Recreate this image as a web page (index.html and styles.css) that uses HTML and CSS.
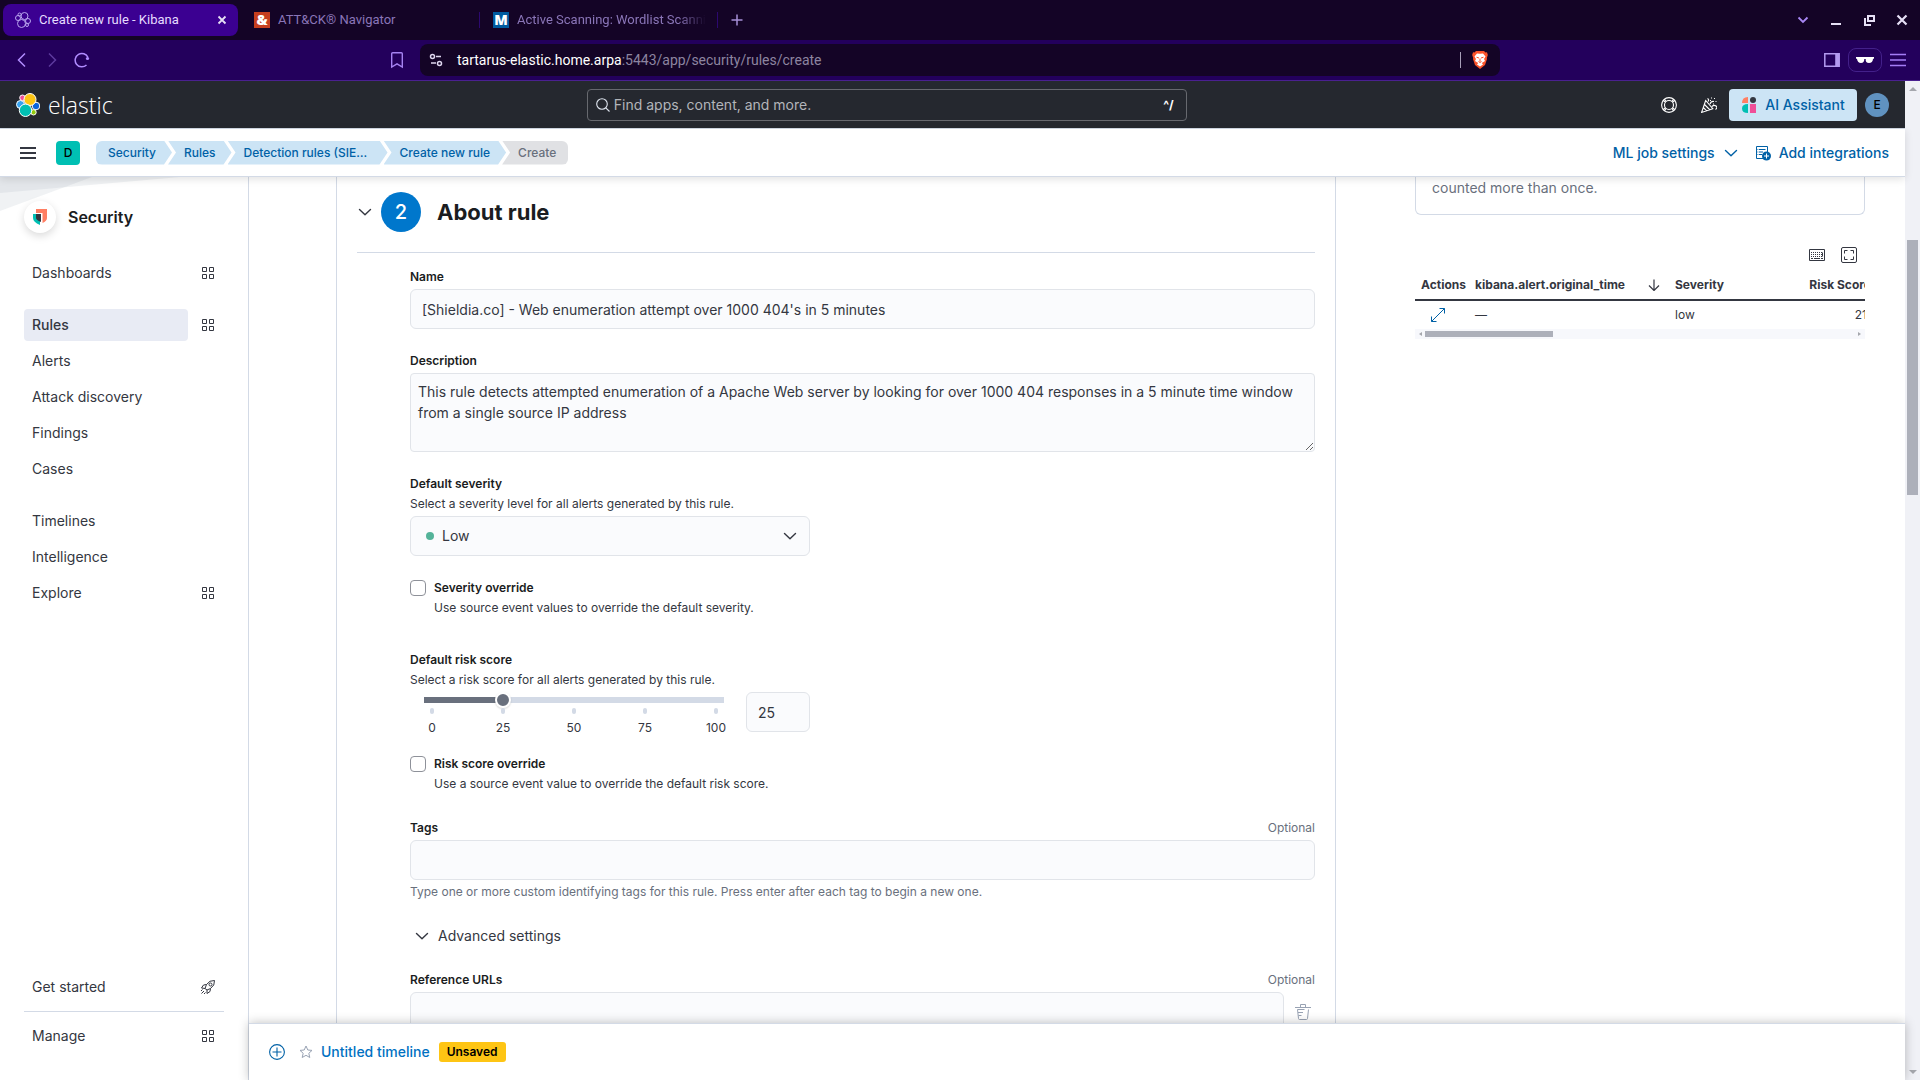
FILE: index.html
```
<!DOCTYPE html>
<html lang="en">
<head>
    <meta charset="UTF-8">
    <meta name="viewport" content="width=device-width, initial-scale=1.0">
    <title>Create new rule - Kibana</title>
    <link rel="stylesheet" href="styles.css">
</head>
<body>

<!-- Shared icons -->
<svg class="sprite" aria-hidden="true">
    <symbol id="i-grid" viewBox="0 0 16 16"><path d="M2.5 2.5h4v4h-4zM9.500 2.500h4v4h-4zM2.500 9.500h4v4h-4zM9.500 9.500h4v4h-4z" fill="none" stroke="currentColor" stroke-linejoin="round"/></symbol>
    <symbol id="i-down" viewBox="0 0 16 16"><path d="M2.500 5.500 8 10.800l5.500-5.300" fill="none" stroke="currentColor" stroke-width="1.400" stroke-linecap="round" stroke-linejoin="round"/></symbol>
</svg>

<!-- Browser window -->
<div class="tabs">
    <div class="tab active">
        <svg width="16" height="16" viewBox="0 0 16 16" fill="none" stroke="#b9a5ee"><circle cx="9.500" cy="4" r="3.500"/><circle cx="6.500" cy="11.500" r="4"/><circle cx="3" cy="6" r="2.500"/><circle cx="13" cy="9" r="2.500"/><circle cx="4.500" cy="2.500" r="1.500"/><circle cx="12" cy="13" r="1.500"/></svg>
        <span class="tab-title">Create new rule - Kibana</span>
        <button class="bare" aria-label="Close tab"><svg width="10" height="10" viewBox="0 0 10 10" stroke="#e6e0f5" stroke-width="1.800"><path d="M1.500 1.500l7 7M8.500 1.500l-7 7"/></svg></button>
    </div>
    <div class="tab">
        <span class="favicon red">&amp;</span>
        <span class="tab-title">ATT&amp;CK® Navigator</span>
    </div>
    <div class="tab last">
        <span class="favicon blue">M</span>
        <span class="tab-title fade">Active Scanning: Wordlist Scanning</span>
    </div>
    <button class="bare new-tab" aria-label="New tab"><svg width="12" height="12" viewBox="0 0 12 12" stroke="#a58fd6" stroke-width="1.500"><path d="M6 .500v11M.500 6h11"/></svg></button>
    <div class="window-buttons">
        <button class="bare" aria-label="Search tabs"><svg width="12" height="12" viewBox="0 0 12 12" fill="none" stroke="#a988f5" stroke-width="1.800"><path d="M1.500 3.500 6 8l4.500-4.500"/></svg></button>
        <button class="bare" aria-label="Minimize"><svg width="12" height="12" viewBox="0 0 12 12" stroke="#e6e0f5" stroke-width="2"><path d="M1 10h10"/></svg></button>
        <button class="bare" aria-label="Restore"><svg width="12" height="12" viewBox="0 0 12 12" fill="none" stroke="#e6e0f5" stroke-width="2"><path d="M5 2h6v5H5zM2 4v7h6"/></svg></button>
        <button class="bare" aria-label="Close"><svg width="12" height="12" viewBox="0 0 12 12" stroke="#e6e0f5" stroke-width="2.200"><path d="M1.500 1.500l9 9M10.500 1.500l-9 9"/></svg></button>
    </div>
</div>

<div class="toolbar">
    <div class="nav-buttons">
        <button class="bare" aria-label="Back"><svg width="16" height="16" viewBox="0 0 16 16" fill="none" stroke="#b18cff" stroke-width="1.500"><path d="M11 1.500 4.500 8 11 14.500"/></svg></button>
        <button class="bare" aria-label="Forward"><svg width="16" height="16" viewBox="0 0 16 16" fill="none" stroke="#5d3a9e" stroke-width="1.500"><path d="M5 1.500 11.500 8 5 14.500"/></svg></button>
        <button class="bare" aria-label="Reload"><svg width="16" height="16" viewBox="0 0 16 16" fill="none" stroke="#b18cff" stroke-width="1.500"><path d="M12.500 13A6.700 6.700 0 1 1 14 5.500"/><circle cx="13.500" cy="6.500" r="1.600" fill="#b18cff" stroke="none"/></svg></button>
    </div>
    <button class="bare bookmark" aria-label="Bookmark"><svg width="16" height="18" viewBox="0 0 16 18" fill="none" stroke="#a583f2" stroke-width="1.400"><path d="M2.700 2.700q0-1 1-1h8.600q1 0 1 1v13.300L8 12.800 2.700 16z"/></svg></button>
    <div class="address">
        <svg width="14" height="14" viewBox="0 0 14 14" fill="none" stroke="#ded6ee" stroke-width="1.500"><circle cx="3.500" cy="3.500" r="2"/><path d="M7 3.500h5M2 10h5"/><circle cx="10.500" cy="10.500" r="2"/></svg>
        <span class="url"><b>tartarus-elastic.home.arpa</b>:5443/app/security/rules/create</span>
        <span class="address-line"></span>
        <svg width="16" height="18" viewBox="0 0 16 18"><path d="M4 0h8l1.500 1.500 1.500-.3.800 2.800-1 3 .2 1-2 6L8 18l-5-4-2-6 .2-1-1-3L1 1.200l1.500.3z" fill="#fb542b"/><path d="M8 2.800l3-.3 2.500 3-1.500 2.500 1 2-3.200 2L11 13.500 8 15.500l-3-2L6.200 12 3 10l1-2-1.500-2.500 2.500-3z" fill="#fff"/><path d="M4.500 6.200 7 7M11.500 6.200 9 7M8 7.500v3M6.500 10.500 8 11.500l1.500-1" fill="none" stroke="#fb542b"/></svg>
    </div>
    <div class="browser-actions">
        <button class="bare" aria-label="Sidebar"><svg width="16" height="14" viewBox="0 0 16 14" fill="none" stroke="#b39af0" stroke-width="1.500"><path d="M.800.800h14.400v12.400H.800z"/><path d="M13.200 1v12" stroke-width="4"/></svg></button>
        <button class="bare private" aria-label="Private window"><svg width="18" height="8" viewBox="0 0 18 8" fill="#fff"><path d="M0 1h18v1.500l-1 .5q-.300 4-4 4t-3.300-4H8.300Q8.300 7 5 7T1 3L0 2.500z"/></svg></button>
        <button class="bare" aria-label="Menu"><svg width="16" height="14" viewBox="0 0 16 14" stroke="#a47df5" stroke-width="1.400"><path d="M0 1.500h16M0 7h16M0 12.500h16"/></svg></button>
    </div>
</div>

<div class="viewport">
<div class="app">

    <header class="top-bar">
        <a class="brand" href="#">
            <svg width="24" height="24" viewBox="0 0 24 24" stroke="#fff" stroke-width="1"><circle cx="4.500" cy="11.500" r="4" fill="#36a2ef"/><circle cx="6.500" cy="4.800" r="2.800" fill="#f04e98"/><circle cx="20" cy="13" r="3.800" fill="#0b64dd"/><circle cx="17.500" cy="19.300" r="2.700" fill="#93c90e"/><circle cx="14" cy="6.500" r="6" fill="#fec514"/><circle cx="9.500" cy="17.300" r="6.200" fill="#00bfb3"/></svg>
            <span class="brand-name">elastic</span>
        </a>
        <label class="search">
            <svg width="14" height="14" viewBox="0 0 14 14" fill="none" stroke="#dfe5ef" stroke-width="1.100"><circle cx="6" cy="6" r="5.300"/><path d="M9.800 9.800 13.500 13.500"/></svg>
            <input type="search" placeholder="Find apps, content, and more." aria-label="Find apps, content, and more.">
            <kbd>^/</kbd>
        </label>
        <div class="top-actions">
            <button class="bare" aria-label="Help"><svg width="16" height="16" viewBox="0 0 16 16" fill="none" stroke="#fff" stroke-width="1.100"><circle cx="8" cy="8" r="7.400"/><circle cx="8" cy="8" r="4.500"/><path d="M3 1.800l2.300 2.700M1.800 3 4.500 5.300M13 1.800l-2.300 2.700M14.200 3l-2.700 2.300M3 14.200l2.300-2.700M1.800 13l2.700-2.300M13 14.200l-2.300-2.700M14.200 13l-2.700-2.300"/></svg></button>
            <button class="bare" aria-label="What's new"><svg width="16" height="16" viewBox="0 0 16 16" fill="none" stroke="#fff" stroke-width="1.100"><path d="M4.700 3.500.600 15.400l11.200-3.700zM3.500 7.500l5 5M2.300 10.500l3.400 3.400M6.500 1.500q2 1 .5 3M9 7q1-3 4-2.500M11 9.500q2-2 4-.500t-.5 3.500"/><path d="M10 1h1M13 1.500h1M14.500 4.500h1M9 3.500h1M12 7h1"/></svg></button>
            <button class="ai-button"><svg width="16" height="16" viewBox="0 0 16 16"><path d="M7 0v6H1Q1 0 7 0z" fill="#ff7e62"/><circle cx="12" cy="3" r="3" fill="#343741"/><path d="M7 7v9Q1 16 1 11.500T7 7z" fill="#00bfb3"/><path d="M9 7h6v9H9z" fill="#f04e98"/></svg>AI Assistant</button>
            <span class="avatar">E</span>
        </div>
    </header>

    <div class="sub-bar">
        <button class="bare" aria-label="Toggle navigation"><svg width="16" height="12" viewBox="0 0 16 12" stroke="#343741" stroke-width="2"><path d="M0 1h16M0 6h16M0 11h16"/></svg></button>
        <span class="space">D</span>
        <nav class="crumbs" aria-label="Breadcrumbs">
            <a href="#">Security</a>
            <a href="#">Rules</a>
            <a class="long" href="#">Detection rules (SIE…</a>
            <a href="#">Create new rule</a>
            <span>Create</span>
        </nav>
        <div class="sub-actions">
            <button class="bare link">ML job settings <svg width="16" height="16"><use href="#i-down"/></svg></button>
            <a class="link" href="#"><svg width="16" height="16" viewBox="0 0 16 16" fill="none" stroke="#0061a6"><path d="M8 13.500H1.500v-12h11V7M4 4.500h6.500M4 7h4M4 9.500h3M2.500 4.500h.8M2.500 7h.8M2.500 9.500h.8"/><circle cx="11.500" cy="11" r="4.500" fill="#0061a6" stroke="none"/><path d="M11.500 8.500v5M9 11h5" stroke="#fff"/></svg>Add integrations</a>
        </div>
    </div>

    <div class="body">
        <aside class="sidebar">
            <svg class="sidebar-art" width="180" height="36" viewBox="0 0 180 36" fill="#98a2b3" fill-opacity=".14"><path d="M0 0h180L0 16z"/><path d="M0 0h92L0 34z"/></svg>
            <div class="solution">
                <span class="solution-icon"><svg width="14" height="16" viewBox="0 0 14 16"><path d="M3 0h11v9q0 3-4.500 5V4H3z" fill="#ff7e62"/><path d="M0 5h7v11q-7-3-7-7z" fill="#00bfb3"/><path d="M3 5h5v8q-5-2-5-4z" fill="#343741"/></svg></span>
                <h2>Security</h2>
            </div>
            <nav class="side-nav">
                <ul>
                    <li><a href="#">Dashboards</a><button class="bare" aria-label="Dashboards panel"><svg width="16" height="16"><use href="#i-grid"/></svg></button></li>
                </ul>
                <ul>
                    <li><a class="selected" href="#">Rules</a><button class="bare" aria-label="Rules panel"><svg width="16" height="16"><use href="#i-grid"/></svg></button></li>
                    <li><a href="#">Alerts</a></li>
                    <li><a href="#">Attack discovery</a></li>
                    <li><a href="#">Findings</a></li>
                    <li><a href="#">Cases</a></li>
                </ul>
                <ul>
                    <li><a href="#">Timelines</a></li>
                    <li><a href="#">Intelligence</a></li>
                    <li><a href="#">Explore</a><button class="bare" aria-label="Explore panel"><svg width="16" height="16"><use href="#i-grid"/></svg></button></li>
                </ul>
            </nav>
            <ul class="side-footer">
                <li><a href="#">Get started</a><svg width="16" height="16" viewBox="0 0 16 16" fill="none" stroke="#343741"><path d="M14.500 1.500q-5-.500-8 4l-1.500 4L7 11l3.500-1.500q4.500-3 4-8zM6.500 5.500l-3 .5L1.500 9 5 9.500M10.500 9.500l-.5 3-3 2V11M1.500 14.500l2.500-2.500M1 12l1.500-1.500M4 15l1.500-1.500"/><circle cx="10.500" cy="5.500" r="1.500"/></svg></li>
                <li><a href="#">Manage</a><button class="bare" aria-label="Manage panel"><svg width="16" height="16"><use href="#i-grid"/></svg></button></li>
            </ul>
        </aside>

        <div class="content">
            <div class="columns">
                <main class="panel">
                    <div class="step-head">
                        <button class="bare" aria-label="Collapse step"><svg width="16" height="16"><use href="#i-down"/></svg></button>
                        <span class="step-number">2</span>
                        <h1>About rule</h1>
                    </div>
                    <form class="step-form">
                        <div class="field">
                            <label for="name">Name</label>
                            <input class="box" id="name" type="text" value="[Shieldia.co] - Web enumeration attempt over 1000 404's in 5 minutes">
                        </div>
                        <div class="field">
                            <label for="description">Description</label>
                            <textarea class="box" id="description">This rule detects attempted enumeration of a Apache Web server by looking for over 1000 404 responses in a 5 minute time window from a single source IP address</textarea>
                        </div>
                        <div class="field half">
                            <label for="severity">Default severity</label>
                            <span class="hint">Select a severity level for all alerts generated by this rule.</span>
                            <div class="select-wrap">
                                <select class="box" id="severity"><option>Low</option><option>Medium</option><option>High</option><option>Critical</option></select>
                                <span class="dot"></span>
                                <svg class="select-arrow" width="16" height="16"><use href="#i-down"/></svg>
                            </div>
                        </div>
                        <div class="override">
                            <input type="checkbox" id="severity-override">
                            <label for="severity-override">Severity override</label>
                            <span class="hint">Use source event values to override the default severity.</span>
                        </div>
                        <div class="field half risk">
                            <label for="risk">Default risk score</label>
                            <span class="hint">Select a risk score for all alerts generated by this rule.</span>
                            <div class="risk-row">
                                <div class="slider">
                                    <input type="range" id="risk" min="0" max="100" value="25">
                                    <div class="ticks"><span>0</span><span>25</span><span>50</span><span>75</span><span>100</span></div>
                                </div>
                                <input class="box risk-value" type="text" value="25" aria-label="Risk score value">
                            </div>
                        </div>
                        <div class="override">
                            <input type="checkbox" id="risk-override">
                            <label for="risk-override">Risk score override</label>
                            <span class="hint">Use a source event value to override the default risk score.</span>
                        </div>
                        <div class="field tags">
                            <div class="label-row"><label for="tags">Tags</label><span class="muted">Optional</span></div>
                            <input class="box" id="tags" type="text">
                            <span class="muted help">Type one or more custom identifying tags for this rule. Press enter after each tag to begin a new one.</span>
                        </div>
                        <button class="bare accordion" type="button"><svg width="16" height="16"><use href="#i-down"/></svg>Advanced settings</button>
                        <div class="field">
                            <div class="label-row"><label for="urls">Reference URLs</label><span class="muted">Optional</span></div>
                            <div class="url-row">
                                <input class="box" id="urls" type="text">
                                <button class="bare" type="button" aria-label="Delete"><svg width="16" height="16" viewBox="0 0 16 16" fill="none" stroke="#98a2b3"><path d="M0 3.500h16M5.500 3.500V.500h5v3M2.500 5.500l1 9q.100 1 1 1h7q.900 0 1-1l1-9M2.500 5.500h7M3 8.500h5M3.500 11.500h3"/></svg></button>
                            </div>
                        </div>
                    </form>
                </main>

                <section class="preview">
                    <div class="callout">counted more than once.</div>
                    <div class="grid-tools">
                        <button class="bare" aria-label="Keyboard shortcuts"><svg width="16" height="16" viewBox="0 0 16 16" fill="none" stroke="#343741"><path d="M.500 2.500h15v11H.500z"/><path d="M2 5.500h12M2 7.500h12M2 9.500h12" stroke-dasharray="1 1"/><path d="M2 11.500h2M5 11.500h6M12 11.500h2M13.500 5.500v4"/></svg></button>
                        <button class="bare" aria-label="Full screen"><svg width="16" height="16" viewBox="0 0 16 16" fill="none" stroke="#343741"><rect x=".5" y=".5" width="15" height="15" rx="1.500"/><path d="M3.500 6.500v-3h3M9.500 3.500h3v3M12.500 9.500v3h-3M6.500 12.500h-3v-3"/></svg></button>
                    </div>
                    <div class="table-wrap">
                        <table>
                            <colgroup><col class="c-actions"><col class="c-time"><col class="c-severity"><col class="c-risk"></colgroup>
                            <thead>
                                <tr><th>Actions</th><th><div class="th-sort">kibana.alert.original_time<svg width="12" height="12" viewBox="0 0 12 12" fill="none" stroke="#343741" stroke-width="1.200"><path d="M6 .500v11M1 6.500l5 5 5-5"/></svg></div></th><th>Severity</th><th class="num">Risk Score</th></tr>
                            </thead>
                            <tbody>
                                <tr><td class="expand"><button class="bare" aria-label="Expand row"><svg width="16" height="16" viewBox="0 0 16 16" fill="none" stroke="#0061a6"><path d="M9.500 1.500h5v5M14.500 1.500l-13 13M1.500 9.500v5h5"/></svg></button></td><td>—</td><td>low</td><td class="num">21</td></tr>
                            </tbody>
                        </table>
                    </div>
                    <div class="hscroll"><i class="arrow-left"></i><span></span><i class="arrow-right"></i></div>
                </section>
            </div>

            <div class="timeline-bar">
                <button class="bare" aria-label="New timeline"><svg width="16" height="16" viewBox="0 0 16 16" fill="none" stroke="#0061a6" stroke-width="1.100"><circle cx="8" cy="8" r="7.400"/><path d="M8 3.500v9M3.500 8h9"/></svg></button>
                <button class="bare" aria-label="Favorite"><svg width="14" height="14" viewBox="0 0 14 14" fill="none" stroke="#98a2b3"><path d="M7 1l1.800 4 4.200.4-3.200 2.900 1 4.200L7 10.300l-3.800 2.200 1-4.200L1 5.400 5.200 5z"/></svg></button>
                <a class="timeline-title" href="#">Untitled timeline</a>
                <span class="badge">Unsaved</span>
            </div>
        </div>
    </div>
</div>
<div class="vscroll"><i class="arrow-up"></i><span></span><i class="arrow-down"></i></div>
</div>

</body>
</html>
```
FILE: styles.css
```
* {
    box-sizing: border-box;
}
body {
    margin: 0;
    height: 100vh;
    overflow: hidden;
    display: flex;
    flex-direction: column;
    font-family: Inter, sans-serif;
    font-size: 14px;
    line-height: 20px;
    color: #343741;
    background-color: #fff;
}
h1, h2, ul {
    margin: 0;
    padding: 0;
}
ul {
    list-style: none;
}
a {
    color: inherit;
    text-decoration: none;
}
svg {
    display: block;
    flex: none;
}
input, textarea, select, button {
    font: inherit;
    color: inherit;
}
.sprite {
    position: absolute;
    width: 0;
    height: 0;
}
.bare {
    display: flex;
    align-items: center;
    justify-content: center;
    padding: 0;
    border: none;
    background: none;
    cursor: pointer;
}

/* Browser window */
.tabs {
    flex: none;
    display: flex;
    align-items: center;
    height: 40px;
    padding-left: 3px;
    background-color: #140426;
    font-family: Roboto, "Noto Sans", sans-serif;
    font-size: 13px;
    color: #8a76b8;
}
.tab {
    display: flex;
    align-items: center;
    gap: 8px;
    width: 239px;
    height: 32px;
    padding: 0 12px 0 14px;
    overflow: hidden;
}
.tab.active {
    width: 235px;
    margin-right: 2px;
    padding: 0 11px 0 12px;
    border-radius: 8px;
    background-color: #3b0091;
    color: #e6dcff;
}
.tab.last {
    position: relative;
}
.tab.last::before, .tab.last::after {
    content: "";
    position: absolute;
    left: 0;
    width: 1px;
    height: 16px;
    background-color: #2c0870;
}
.tab.last::after {
    left: auto;
    right: 0;
}
.tab-title {
    flex: 1;
    min-width: 0;
    white-space: nowrap;
    overflow: hidden;
}
.fade {
    mask-image: linear-gradient(90deg, #000 85%, transparent);
}
.favicon {
    flex: none;
    width: 16px;
    height: 16px;
    color: #fff;
    font-family: "Noto Sans", sans-serif;
    font-size: 14px;
    font-weight: 900;
    line-height: 16px;
    text-align: center;
}
.red {
    background-color: #c63f1f;
}
.blue {
    background-color: #005b9f;
}
.new-tab {
    width: 38px;
    height: 32px;
}
.window-buttons {
    display: flex;
    gap: 21px;
    margin-left: auto;
    padding-right: 12px;
}
.toolbar {
    flex: none;
    display: flex;
    align-items: center;
    height: 41px;
    border-bottom: 1px solid #4a2090;
    background-color: #23005c;
    font-family: Roboto, "Noto Sans", sans-serif;
}
.nav-buttons {
    display: flex;
    gap: 14px;
    padding-left: 14px;
}
.bookmark {
    margin-left: auto;
    padding-right: 15px;
}
.address {
    flex: 0 0 56.25%;
    display: flex;
    align-items: center;
    height: 32px;
    padding: 0 12px 0 9px;
    border-radius: 8px;
    background-color: #140426;
}
.url {
    flex: 1;
    padding-left: 14px;
    color: #8d84a0;
}
.url b {
    font-weight: 400;
    color: #fff;
}
.address-line {
    width: 1px;
    height: 16px;
    margin-right: 11px;
    background-color: #a79fb8;
}
.browser-actions {
    flex: 1;
    display: flex;
    align-items: center;
    justify-content: flex-end;
    gap: 8px;
    padding-right: 14px;
    max-width: 420px;
}
.private {
    width: 34px;
    height: 24px;
    border: 1px solid #43208a;
    border-radius: 8px;
}

/* Page */
.viewport {
    flex: 1;
    min-height: 0;
    display: flex;
}
.app {
    flex: 1;
    min-width: 0;
    display: flex;
    flex-direction: column;
}
.vscroll {
    display: flex;
    flex-direction: column;
    align-items: center;
    width: 15px;
    padding: 6px 0;
    background-color: #f0f1f6;
}
.vscroll span {
    width: 11px;
    height: 255px;
    margin: 149px 0 auto;
    background-color: #adb0ba;
}
.arrow-up, .arrow-down {
    border: 4px solid transparent;
    border-top: none;
    border-bottom-color: #a5a7ad;
}
.arrow-down {
    border: 4px solid transparent;
    border-bottom: none;
    border-top-color: #a5a7ad;
}
.top-bar {
    flex: none;
    display: flex;
    align-items: center;
    justify-content: space-between;
    height: 48px;
    padding: 0 16px;
    border-bottom: 1px solid #d3dae6;
    background-color: #25282f;
}
.brand {
    display: flex;
    align-items: center;
    gap: 8px;
}
.brand-name {
    font-family: "Open Sans", sans-serif;
    font-size: 23px;
    font-weight: 300;
    color: #fff;
}
.search {
    display: flex;
    align-items: center;
    width: 600px;
    height: 32px;
    padding: 0 12px 0 8px;
    border: 1px solid #67696f;
    border-radius: 4px;
    color: #fff;
    font-weight: 400;
}
.search input {
    flex: 1;
    padding: 0 4px;
    border: none;
    outline: none;
    background: none;
}
.search input::placeholder {
    color: #b3b5ba;
}
.search kbd {
    font-family: inherit;
    font-size: 12px;
    font-weight: 700;
}
.top-actions {
    display: flex;
    align-items: center;
    gap: 24px;
}
.ai-button {
    display: flex;
    align-items: center;
    justify-content: center;
    gap: 8px;
    width: 128px;
    height: 32px;
    margin: 0 -16px 0 -12px;
    padding: 0;
    border: none;
    border-radius: 4px;
    background-color: #cce4f5;
    color: #0061a6;
    font-weight: 500;
}
.avatar, .space {
    width: 24px;
    height: 24px;
    font-size: 12px;
    font-weight: 500;
    line-height: 24px;
    text-align: center;
    color: #000;
}
.avatar {
    border-radius: 50%;
    background-color: #6092c0;
}
.space {
    margin: 0 16px 0 20px;
    border-radius: 4px;
    background-color: #00bfb3;
}
.sub-bar {
    flex: none;
    position: relative;
    z-index: 2;
    display: flex;
    align-items: center;
    height: 48px;
    padding: 0 16px 0 20px;
    border-bottom: 1px solid #d3dae6;
    background-color: #fff;
    box-shadow: 0 2px 8px rgba(0, 0, 0, 0.12);
}
.crumbs {
    display: flex;
    font-size: 12px;
    font-weight: 500;
    line-height: 24px;
    color: #0061a6;
}
.crumbs > * {
    margin-left: -4px;
    padding: 0 16px;
    background-color: #cce4f5;
    clip-path: polygon(0 0, calc(100% - 8px) 0, 100% 50%, calc(100% - 8px) 100%, 0 100%, 8px 50%);
}
.crumbs > .long {
    width: 160px;
}
.crumbs > :first-child {
    margin-left: 0;
    padding-left: 12px;
    border-radius: 6px 0 0 6px;
    clip-path: polygon(0 0, calc(100% - 8px) 0, 100% 50%, calc(100% - 8px) 100%, 0 100%);
}
.crumbs > :last-child {
    padding-right: 12px;
    border-radius: 0 6px 6px 0;
    background-color: #e0e1e4;
    color: #69707d;
    clip-path: polygon(0 0, 100% 0, 100% 100%, 0 100%, 8px 50%);
}
.sub-actions {
    display: flex;
    gap: 16px;
    margin-left: auto;
}
.link {
    display: flex;
    align-items: center;
    gap: 8px;
    color: #0061a6;
    font-weight: 500;
}
.body {
    flex: 1;
    min-height: 0;
    display: flex;
}

/* Sidebar */
.sidebar {
    position: relative;
    display: flex;
    flex-direction: column;
    width: 249px;
    padding: 24px 24px 28px;
    border-right: 1px solid #d3dae6;
}
.sidebar-art {
    position: absolute;
    top: 0;
    left: 0;
}
.solution {
    position: relative;
    display: flex;
    align-items: center;
    gap: 12px;
    margin-bottom: 24px;
}
.solution-icon {
    display: flex;
    align-items: center;
    justify-content: center;
    width: 32px;
    height: 32px;
    border-radius: 50%;
    background-color: #fff;
    box-shadow: 0 3px 8px rgba(0, 0, 0, 0.15);
}
.solution h2 {
    font-size: 16px;
    font-weight: 600;
    color: #1a1c21;
}
.sidebar ul {
    display: flex;
    flex-direction: column;
    gap: 4px;
    margin-bottom: 20px;
}
.sidebar li {
    display: flex;
    align-items: center;
    gap: 12px;
    padding-right: 8px;
}
.sidebar li a {
    flex: 0 0 164px;
    padding: 0 8px;
    border-radius: 4px;
    line-height: 32px;
}
.sidebar li a.selected {
    background-color: #e8ebf4;
    font-weight: 500;
}
.sidebar .side-footer {
    gap: 0;
    margin: auto 0 0;
}
.side-footer li + li {
    margin-top: 8px;
    padding-top: 8px;
    border-top: 1px solid #d3dae6;
}

/* Rule form */
.content {
    flex: 1;
    min-width: 0;
    display: flex;
    flex-direction: column;
}
.columns {
    flex: 1;
    min-height: 0;
    display: flex;
    gap: 79px;
    padding: 0 40px 0 87px;
    overflow: hidden;
}
.panel {
    flex: 1;
    padding: 0 20px;
    border: 1px solid #d3dae6;
    border-width: 0 1px;
}
.step-head {
    display: flex;
    align-items: center;
    padding: 15px 0 20px;
    border-bottom: 1px solid #d3dae6;
}
.step-number {
    width: 40px;
    height: 40px;
    margin: 0 16px 0 8px;
    border-radius: 50%;
    background-color: #0077cc;
    color: #fff;
    font-size: 20px;
    font-weight: 500;
    line-height: 40px;
    text-align: center;
}
h1 {
    font-size: 22px;
    font-weight: 700;
    color: #1a1c21;
}
.step-form {
    display: flex;
    flex-direction: column;
    gap: 24px;
    padding: 16px 0 0 53px;
    font-size: 12px;
    line-height: 16px;
}
.field {
    display: flex;
    flex-direction: column;
    gap: 4px;
}
.half {
    width: 400px;
}
.step-form label {
    font-weight: 600;
    color: #1a1c21;
}
.box {
    width: 100%;
    height: 40px;
    padding: 0 11px;
    border: 1px solid #e1e4e9;
    border-radius: 6px;
    background-color: #fafbfd;
    font-size: 14px;
    outline: none;
}
textarea.box {
    height: 79px;
    padding: 7px;
    border-radius: 4px;
    line-height: 21px;
    resize: vertical;
}
.select-wrap {
    position: relative;
}
select.box {
    padding-left: 31px;
    appearance: none;
}
.dot {
    position: absolute;
    top: 16px;
    left: 16px;
    width: 8px;
    height: 8px;
    border-radius: 50%;
    background-color: #54b399;
}
.select-arrow {
    position: absolute;
    top: 12px;
    right: 12px;
    pointer-events: none;
}
.override {
    display: grid;
    grid-template-columns: 16px 1fr;
    gap: 4px 8px;
}
.override .hint {
    grid-column: 2;
}
.override input {
    width: 16px;
    height: 16px;
    margin: 0;
    border: 1px solid #8e9199;
    border-radius: 4px;
    background-color: #fff;
    appearance: none;
}
.risk {
    margin-top: 12px;
}
.risk-row {
    display: flex;
    gap: 22px;
    height: 40px;
    padding-left: 14px;
}
.slider {
    flex: 1;
}
.slider input {
    display: block;
    width: 100%;
    height: 16px;
    margin: 0;
    background: linear-gradient(90deg, #69707d 26%, #d3dae6 26%) center / 100% 6px no-repeat;
    border-radius: 3px;
    appearance: none;
}
.slider input::-webkit-slider-thumb {
    width: 16px;
    height: 16px;
    border: 2px solid #fff;
    border-radius: 50%;
    background-color: #69707d;
    box-shadow: 0 1px 2px rgba(0, 0, 0, 0.15);
    appearance: none;
}
.ticks {
    display: flex;
    justify-content: space-between;
    margin: 0 -12px;
}
.ticks span {
    width: 40px;
    text-align: center;
}
.ticks span::before {
    content: "";
    display: block;
    width: 4px;
    height: 6px;
    margin: 0 auto 6px;
    border-radius: 2px;
    background-color: #d3dae6;
}
.risk-value {
    flex: none;
    width: 64px;
}
.tags {
    margin-top: 4px;
}
.label-row {
    display: flex;
    justify-content: space-between;
}
.muted {
    color: #69707d;
}
.accordion {
    align-self: flex-start;
    gap: 8px;
    height: 24px;
    padding-left: 4px;
    font-size: 14px;
}
.url-row {
    display: flex;
    gap: 8px;
}
.url-row .bare {
    width: 24px;
}

/* Rule preview */
.preview {
    flex: 0 0 450px;
    min-width: 0;
}
.callout {
    height: 38px;
    padding: 1px 16px;
    border: 1px solid #d3dae6;
    border-top: none;
    border-radius: 0 0 6px 6px;
    color: #69707d;
}
.grid-tools {
    display: flex;
    justify-content: flex-end;
    gap: 16px;
    padding: 32px 8px 8px;
}
.table-wrap {
    overflow: hidden;
}
table {
    width: 462px;
    table-layout: fixed;
    border-collapse: collapse;
    font-size: 12px;
    line-height: 16px;
}
th, td {
    padding: 6px;
    text-align: left;
    white-space: nowrap;
}
th {
    border-bottom: 2px solid #343741;
    font-weight: 700;
}
td {
    height: 28px;
}
.c-actions {
    width: 54px;
}
.c-time {
    width: 200px;
}
.c-severity {
    width: 100px;
}
.c-risk {
    width: 108px;
}
.th-sort {
    display: flex;
    align-items: center;
    justify-content: space-between;
    padding-right: 3px;
}
.expand .bare {
    margin-left: 9px;
}
.num {
    text-align: right;
}
td.num {
    padding-right: 10px;
}
.hscroll {
    display: flex;
    align-items: center;
    height: 10px;
    padding: 0 4px;
    background-color: #f7f8fc;
}
.hscroll span {
    width: 128px;
    height: 6px;
    margin: 0 auto 0 3px;
    background-color: #adb0ba;
}
.arrow-left, .arrow-right {
    border: 2px solid transparent;
    border-left: none;
    border-right: 3px solid #a5a7ad;
}
.arrow-right {
    border: 2px solid transparent;
    border-right: none;
    border-left: 3px solid #a5a7ad;
}

/* Timeline bar */
.timeline-bar {
    flex: none;
    position: relative;
    display: flex;
    align-items: center;
    height: 57px;
    padding-left: 20px;
    border-top: 1px solid #d3dae6;
    background-color: #fff;
    box-shadow: 0 0 10px rgba(0, 0, 0, 0.25);
}
.timeline-bar .bare {
    margin-right: 14px;
}
.timeline-bar .bare + .bare {
    margin-right: 8px;
}
.timeline-title {
    margin-right: 9px;
    color: #0071c2;
    font-weight: 500;
}
.badge {
    padding: 0 8px;
    border-radius: 3px;
    background-color: #fec514;
    color: #000;
    font-size: 12px;
    font-weight: 600;
}
```
